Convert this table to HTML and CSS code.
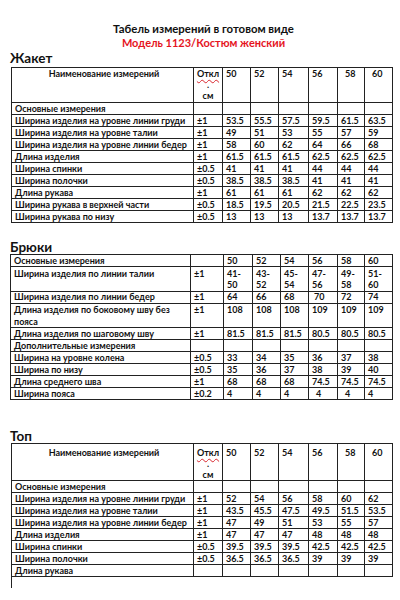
FILE: index.html
```html
<!DOCTYPE html>
<html lang="ru">
<head>
<meta charset="utf-8">
<link rel="stylesheet" href="styles.css">
</head>
<body>
<div class="page">
  <div class="title">Табель измерений в готовом виде</div>
  <div class="subtitle">Модель 1123/Костюм женский</div>

  <div class="section s-jacket">Жакет</div>
  <table class="grid t-jacket">
    <colgroup><col class="c-name"><col class="c-dev"><col class="c50"><col class="c52"><col class="c54"><col class="c56"><col class="c58"><col class="c60"></colgroup>
    <tr class="head">
      <td class="hname">Наименование измерений</td>
      <td class="hdev"><div class="devbox"><span class="spell">Откл</span><br>.<br>см</div></td>
      <td>50</td><td>52</td><td>54</td><td>56</td><td class="shift">58</td><td class="shift">60</td>
    </tr>
    <tr><td>Основные измерения</td><td></td><td></td><td></td><td></td><td></td><td></td><td></td></tr>
    <tr><td>Ширина изделия на уровне линии груди</td><td>±1</td><td>53.5</td><td>55.5</td><td>57.5</td><td>59.5</td><td>61.5</td><td>63.5</td></tr>
    <tr><td>Ширина изделия на уровне  талии</td><td>±1</td><td>49</td><td>51</td><td>53</td><td>55</td><td>57</td><td>59</td></tr>
    <tr><td>Ширина изделия на уровне линии бедер</td><td>±1</td><td>58</td><td>60</td><td>62</td><td>64</td><td>66</td><td>68</td></tr>
    <tr><td>Длина изделия</td><td>±1</td><td>61.5</td><td>61.5</td><td>61.5</td><td>62.5</td><td>62.5</td><td>62.5</td></tr>
    <tr><td>Ширина спинки</td><td>±0.5</td><td>41</td><td>41</td><td>41</td><td>44</td><td>44</td><td>44</td></tr>
    <tr><td>Ширина полочки</td><td>±0.5</td><td>38.5</td><td>38.5</td><td>38.5</td><td>41</td><td>41</td><td>41</td></tr>
    <tr><td>Длина рукава</td><td>±1</td><td>61</td><td>61</td><td>61</td><td>62</td><td>62</td><td>62</td></tr>
    <tr><td>Ширина рукава в верхней части</td><td>±0.5</td><td>18.5</td><td>19.5</td><td>20.5</td><td>21.5</td><td>22.5</td><td>23.5</td></tr>
    <tr><td>Ширина рукава по низу</td><td>±0.5</td><td>13</td><td>13</td><td>13</td><td>13.7</td><td>13.7</td><td>13.7</td></tr>
  </table>

  <div class="section s-pants">Брюки</div>
  <table class="grid t-pants">
    <colgroup><col class="p-name"><col class="p-dev"><col class="p50"><col class="p52"><col class="p54"><col class="p56"><col class="p58"><col class="p60"></colgroup>
    <tr><td>Основные измерения</td><td></td><td>50</td><td>52</td><td>54</td><td>56</td><td>58</td><td>60</td></tr>
    <tr class="tall"><td>Ширина изделия по линии талии</td><td>±1</td><td>41-<br>50</td><td>43-<br>52</td><td>45-<br>54</td><td>47-<br>56</td><td>49-<br>58</td><td>51-<br>60</td></tr>
    <tr><td>Ширина изделия по линии  бедер</td><td>±1</td><td>64</td><td>66</td><td>68</td><td class="nudge">70</td><td>72</td><td>74</td></tr>
    <tr class="tall"><td>Длина изделия по боковому шву без<br>пояса</td><td>±1</td><td>108</td><td>108</td><td>108</td><td>109</td><td>109</td><td>109</td></tr>
    <tr><td>Длина изделия по шаговому шву</td><td>±1</td><td>81.5</td><td>81.5</td><td>81.5</td><td>80.5</td><td>80.5</td><td>80.5</td></tr>
    <tr><td>Дополнительные измерения</td><td></td><td></td><td></td><td></td><td></td><td></td><td></td></tr>
    <tr><td>Ширина на уровне колена</td><td>±0.5</td><td>33</td><td>34</td><td>35</td><td>36</td><td>37</td><td>38</td></tr>
    <tr><td>Ширина по низу</td><td>±0.5</td><td>35</td><td>36</td><td>37</td><td>38</td><td>39</td><td>40</td></tr>
    <tr><td>Длина среднего шва</td><td>±1</td><td>68</td><td>68</td><td>68</td><td>74.5</td><td>74.5</td><td>74.5</td></tr>
    <tr><td>Ширина пояса</td><td>±0.2</td><td>4</td><td>4</td><td>4</td><td class="shift">4</td><td class="shift">4</td><td>4</td></tr>
  </table>

  <div class="section s-top">Топ</div>
  <table class="grid t-top">
    <colgroup><col class="c-name"><col class="c-dev"><col class="c50"><col class="c52"><col class="c54"><col class="c56"><col class="c58"><col class="c60"></colgroup>
    <tr class="head head-top">
      <td class="hname">Наименование измерений</td>
      <td class="hdev"><div class="devbox devbox-top"><span class="spell">Откл</span><br>.<br>см</div></td>
      <td>50</td><td>52</td><td>54</td><td>56</td><td class="shift">58</td><td class="shift">60</td>
    </tr>
    <tr><td>Основные измерения</td><td></td><td></td><td></td><td></td><td></td><td></td><td></td></tr>
    <tr><td>Ширина изделия на уровне линии груди</td><td>±1</td><td>52</td><td>54</td><td>56</td><td>58</td><td>60</td><td>62</td></tr>
    <tr><td>Ширина изделия на уровне  талии</td><td>±1</td><td>43.5</td><td>45.5</td><td>47.5</td><td>49.5</td><td>51.5</td><td>53.5</td></tr>
    <tr><td>Ширина изделия на уровне линии бедер</td><td>±1</td><td>47</td><td>49</td><td>51</td><td>53</td><td>55</td><td>57</td></tr>
    <tr><td>Длина изделия</td><td>±1</td><td>47</td><td>47</td><td>47</td><td>48</td><td>48</td><td>48</td></tr>
    <tr><td>Ширина спинки</td><td>±0.5</td><td>39.5</td><td>39.5</td><td>39.5</td><td>42.5</td><td>42.5</td><td>42.5</td></tr>
    <tr><td>Ширина полочки</td><td>±0.5</td><td>36.5</td><td>36.5</td><td>36.5</td><td>39</td><td>39</td><td>39</td></tr>
    <tr><td>Длина рукава</td><td></td><td></td><td></td><td></td><td></td><td></td><td></td></tr>
  </table>
  <div class="cursor"></div>
</div>
</body>
</html>
```
FILE: styles.css
```css
html, body {
  margin: 0;
  padding: 0;
  background: #ffffff;
}
body {
  width: 400px;
  height: 600px;
  overflow: hidden;
  font-family: Lato, "Open Sans", "DejaVu Sans", sans-serif;
  font-weight: 700;
  color: #111111;
}
.page {
  padding: 22px 0 0 0;
}
.title {
  font-size: 11.4px;
  line-height: 14px;
  text-align: center;
  padding-left: 7px;
}
.subtitle {
  font-size: 11px;
  line-height: 14px;
  text-align: center;
  padding-left: 7px;
  color: #e5141e;
}
.section {
  font-size: 13.5px;
  line-height: 14px;
  padding-left: 10px;
}
.s-jacket { margin-top: 1px; }
.s-pants { margin-top: 17px; }
.s-top { margin-top: 29px; }

.grid {
  border-collapse: separate;
  border-spacing: 0;
  table-layout: fixed;
  border-top: 1px solid #222222;
  border-left: 1px solid #222222;
  font-size: 9px;
  line-height: 10px;
}
.grid tr { height: 12px; }
.grid tr.tall { height: 24px; }
.grid tr.tall td { line-height: 11.5px; }
.grid td {
  border-right: 1px solid #222222;
  border-bottom: 1px solid #222222;
  padding: 0.5px 0 0 3px;
  vertical-align: top;
  white-space: nowrap;
  overflow: hidden;
}
.t-jacket { margin: 2px 0 0 11px; width: 381px; }
.t-top { margin: 0 0 0 11px; width: 381px; }
.t-pants { margin: 0 0 0 10px; width: 382px; }

.c-name { width: 182px; }
.c-dev { width: 29px; }
.c50 { width: 28px; }
.c52 { width: 28px; }
.c54 { width: 30px; }
.c56 { width: 29px; }
.c58 { width: 27px; }
.c60 { width: 28px; }

.p-name { width: 180px; }
.p-dev { width: 33px; }
.p50 { width: 29px; }
.p52 { width: 28px; }
.p54 { width: 28px; }
.p56 { width: 29px; }
.p58 { width: 27px; }
.p60 { width: 28px; }

.grid tr.head { height: 35px; }
.grid tr.head-top { height: 37px; }
.grid tr.head td { padding-top: 0; line-height: 11px; }
.grid tr.head-top td { padding-top: 3px; }
.hname {
  text-align: center;
}
.hdev {
  text-align: center;
}
.grid td.hdev { padding-left: 0; }
.devbox {
  line-height: 11px;
  height: 33px;
}
.devbox-top {
  height: 33px;
}
.spell {
  text-decoration: underline wavy #d8262e;
  text-decoration-thickness: 1px;
  text-underline-offset: 1.5px;
}
.grid td.shift { padding-left: 7px; }
.grid td.nudge { padding-left: 5px; }

.cursor {
  margin-left: 11px;
  width: 0;
  height: 11px;
  border-left: 1px solid #222222;
}
```
